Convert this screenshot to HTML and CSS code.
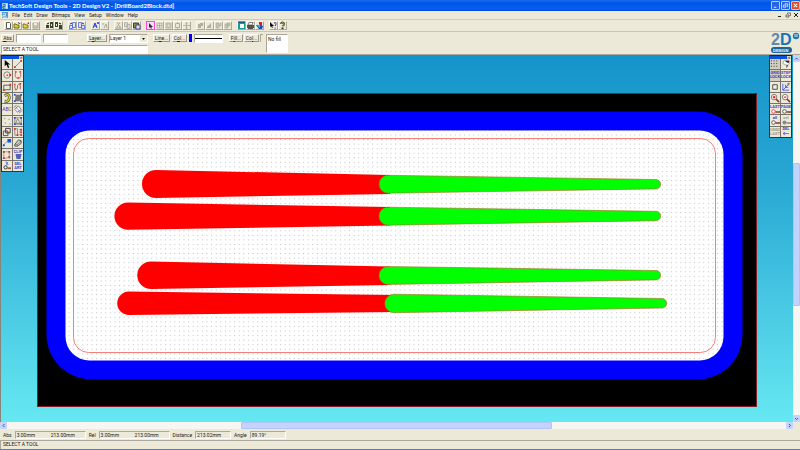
FILE: index.html
```
<!DOCTYPE html>
<html lang="en">
<head>
<meta charset="utf-8">
<title>TechSoft Design Tools - 2D Design V2 - [DrillBoard2Block.dtd]</title>
<link rel="stylesheet" href="styles.css">
</head>
<body>
<div class="app">
  <header class="titlebar">
    <svg class="app-icon" viewBox="0 0 7 7"><rect width="7" height="7" fill="#9fd0f5"/><path d="M1 2h3v2H1v2h3" fill="none" stroke="#23608f"/><path d="M5 1v5" stroke="#fff"/></svg>
    <h1>TechSoft Design Tools - 2D Design V2 - [DrillBoard2Block.dtd]</h1>
    <div class="win-buttons">
      <button class="win" aria-label="Minimize"><svg viewBox="0 0 8 8"><path d="M2 6h3" stroke="#fff"/></svg></button>
      <button class="win" aria-label="Restore"><svg viewBox="0 0 8 8"><path d="M3.500 3V2h3v3h-1M1.500 3.500h3v2.500h-3z" fill="none" stroke="#fff" stroke-width=".8"/></svg></button>
      <button class="win close" aria-label="Close"><svg viewBox="0 0 8 8"><path d="M2 2l4 4M6 2l-4 4" stroke="#fff" stroke-width="1.200"/></svg></button>
    </div>
  </header>

  <nav class="menubar">
    <svg class="doc-icon" viewBox="0 0 7 7"><rect width="7" height="7" fill="#4d9ad0"/><path d="M1 2h3v2H1v2h5" fill="none" stroke="#e8f6ff"/></svg>
    <button>File</button><button>Edit</button><button>Draw</button><button>Bitmaps</button><button>View</button><button>Setup</button><button>Window</button><button>Help</button>
    <div class="doc-buttons">
      <button aria-label="Minimize document"><svg viewBox="0 0 6 6"><path d="M1 4.500h3" stroke="#222"/></svg></button>
      <button aria-label="Restore document"><svg viewBox="0 0 6 6"><path d="M2.500 2V1h3v2.500h-1M1 3h3v2H1z" fill="none" stroke="#444" stroke-width=".7"/></svg></button>
      <button aria-label="Close document"><svg viewBox="0 0 6 6"><path d="M1 1l4 4M5 1L1 5" stroke="#222"/></svg></button>
    </div>
  </nav>

  <div class="toolbar">
    <div class="group">
      <button aria-label="New"><svg viewBox="0 0 9 9"><path d="M2.500 1.500h3l1 1v5h-4z" fill="#fff" stroke="#333" stroke-width=".8"/></svg></button>
      <button aria-label="Open"><svg viewBox="0 0 9 9"><path d="M1 7V3h2l1 1h2v3z" fill="#d8cf3a" stroke="#55500a" stroke-width=".8"/><path d="M5 2q1-1 2 1" fill="none" stroke="#222" stroke-width=".8"/></svg></button>
      <button aria-label="Open example"><svg viewBox="0 0 9 9"><path d="M1 7V3h2l1 1h2v3z" fill="#e0d62d" stroke="#66600a" stroke-width=".8"/><path d="M5 2.500L7 1v2z" fill="#b22"/></svg></button>
      <button aria-label="Save"><svg viewBox="0 0 9 9"><path d="M2 2h5v5H2z" fill="#c8c5b5" stroke="#aaa797"/><path d="M3 2h3v2H3z" fill="#eee"/></svg></button>
    </div>
    <div class="group">
      <button aria-label="Import"><svg viewBox="0 0 9 9"><path d="M1 4h3v3H1zM5 1h3v6H5z" fill="#3b4424"/><path d="M2 3l2-1" stroke="#111"/><path d="M6 3h1v2H6z" fill="#e8e6c9"/></svg></button>
      <button aria-label="Export"><svg viewBox="0 0 9 9"><path d="M1 1h3v5H1zM5 4h3v4H5z" fill="#3b4424"/><path d="M5 2l2 1" stroke="#111"/><path d="M2 3h1v2H2z" fill="#e8e6c9"/></svg></button>
    </div>
    <div class="group">
      <button aria-label="Import picture"><svg viewBox="0 0 9 9"><path d="M4.500 1.500h3v5h-3zM1.500 4.500h3v3h-3z" fill="#dfe6ff" stroke="#4a5fe0" stroke-width=".8"/><path d="M2 3l2-1" stroke="#338"/></svg></button>
      <button aria-label="Export picture"><svg viewBox="0 0 9 9"><path d="M1.500 1.500h3v5h-3zM4.500 4.500h3v3h-3z" fill="#dfe6ff" stroke="#4a5fe0" stroke-width=".8"/><path d="M5 2l2 1" stroke="#338"/></svg></button>
    </div>
    <div class="group">
      <button aria-label="Attribute"><svg viewBox="0 0 9 9"><path d="M2 7l2-5 2 5M3 5h3M6 2h2M7 1v2" fill="none" stroke="#2438e0" stroke-width="1"/></svg></button>
      <button aria-label="Match attributes"><svg viewBox="0 0 9 9"><path d="M2 3h2M4 7l2-4 1 4" fill="none" stroke="#aaa89a" stroke-width="1"/></svg></button>
    </div>
    <div class="group">
      <button aria-label="Cut"><svg viewBox="0 0 9 9"><path d="M3 1l3 5M6 1L3 6" stroke="#aaa89a" stroke-width=".9"/><path d="M2 6h2v1.500H2zM5 6h2v1.500H5z" fill="none" stroke="#aaa89a" stroke-width=".7"/></svg></button>
      <button aria-label="Copy"><svg viewBox="0 0 9 9"><path d="M1.500 1.500h3v4h-3zM4 3.500h3v4H4z" fill="#dedbcb" stroke="#aaa89a" stroke-width=".8"/></svg></button>
      <button aria-label="Paste"><svg viewBox="0 0 9 9"><path d="M1.500 2h5v5h-5z" fill="#8d8a38" stroke="#35340f" stroke-width=".9"/><path d="M4 4h4v4H4z" fill="#dce4ff" stroke="#263599" stroke-width=".8"/></svg></button>
    </div>
    <div class="group">
      <button aria-label="Select"><svg viewBox="0 0 9 9"><rect x=".5" y=".5" width="8" height="8" fill="#f9dff5" stroke="#f04be0"/><path d="M3 2v5l1-1 1 2 1-1-1-1h2z" fill="#442244"/></svg></button>
      <button aria-label="Select group"><svg viewBox="0 0 9 9"><path d="M2 2h5v5H2zM2 4.500h5M4.500 2v5" fill="none" stroke="#aaa89a" stroke-width=".8"/></svg></button>
      <button aria-label="Select all"><svg viewBox="0 0 9 9"><path d="M2 2h5v5H2zM3 3h3v3H3z" fill="none" stroke="#aaa89a" stroke-width=".8"/></svg></button>
      <button aria-label="Resize"><svg viewBox="0 0 9 9"><path d="M2.500 2.500h4v4h-4zM4.500 1v1M4.500 7v1" fill="none" stroke="#aaa89a" stroke-width=".9"/></svg></button>
      <button aria-label="Move"><svg viewBox="0 0 9 9"><path d="M4.500 1v7M1 4.500h7M3.500 2h2M3.500 7h2" stroke="#aaa89a" stroke-width=".8"/></svg></button>
    </div>
    <div class="group">
      <button aria-label="Bring to front"><svg viewBox="0 0 9 9"><path d="M2 3h3v4H2zM4 2h3v3H4z" fill="#b2afa0"/></svg></button>
      <button aria-label="Send to back"><svg viewBox="0 0 9 9"><path d="M2 6l4-4v5H2z" fill="#b2afa0"/></svg></button>
      <button aria-label="Forward"><svg viewBox="0 0 9 9"><path d="M2 2h3v5H2zM6 2h1v3H5" fill="#c5c2b4" stroke="#aaa89a" stroke-width=".6"/></svg></button>
      <button aria-label="Backward"><svg viewBox="0 0 9 9"><path d="M2 3h3v4H2zM4 2h3v3H4z" fill="#c5c2b4" stroke="#aaa89a" stroke-width=".6"/></svg></button>
    </div>
    <div class="group">
      <button aria-label="Print area"><svg viewBox="0 0 9 9"><path d="M1 1h7v7H1z" fill="#159c9c"/><path d="M3 3h4v4H3z" fill="#fff"/><path d="M1 1h7" stroke="#116"/></svg></button>
      <button aria-label="Print"><svg viewBox="0 0 9 9"><path d="M1 4h7v3H1z" fill="#55554a"/><path d="M3 1.500h4L6 4H2z" fill="#fff" stroke="#333" stroke-width=".6"/><path d="M2 7.500h5" stroke="#222" stroke-width=".8"/></svg></button>
      <button aria-label="Colour output"><svg viewBox="0 0 9 9"><path d="M1 4l3 4h3l1-3-2-1z" fill="#1747c5"/><path d="M4 1h3v4H4z" fill="#cc2036"/><path d="M2 5l3-2v4z" fill="#20c5d5"/></svg></button>
    </div>
    <div class="group">
      <button aria-label="Context help"><svg viewBox="0 0 9 9"><path d="M1 1v5l1-1 1 2 1-1-1-1h2z" fill="#111"/><path d="M5 2q2-1 2 .5T6 5M6 6.500v1" fill="none" stroke="#33338f"/></svg></button>
      <button aria-label="Help topics"><svg viewBox="0 0 9 9"><path d="M3 3q0-1.500 1.500-1.500T6 3 4.500 5M4.500 6.500V8" fill="none" stroke="#222" stroke-width="1.800"/><path d="M3 3q0-1.500 1.500-1.500T6 3 4.500 5" fill="none" stroke="#d4d52b" stroke-width=".8"/></svg></button>
    </div>
  </div>

  <div class="properties">
    <div class="prop-left">
      <div class="prop-row">
        <button class="btn abs"><u>A</u>bs</button>
        <input type="text" aria-label="X coordinate"><input type="text" aria-label="Y coordinate">
        <button class="btn layer-btn">L<u>a</u>yer...</button>
        <div class="combo"><select aria-label="Layer"><option>Layer 1</option></select><svg viewBox="0 0 7 7"><path d="M2 3h3L3.500 5z" fill="#111"/></svg></div>
      </div>
      <output class="prompt">SELECT A TOOL</output>
    </div>
    <div class="prop-styles">
      <button class="btn w17">Li<u>n</u>e...</button>
      <button class="btn w15">C<u>o</u>l...</button>
      <span class="pen-colour"></span>
      <span class="pen-line"></span>
    </div>
    <div class="prop-fill">
      <button class="btn w14">F<u>i</u>ll...</button>
      <button class="btn w15">Co<u>l</u>...</button>
      <span class="fill-colour"></span>
    </div>
    <output class="fill-preview">No fill</output>
    <svg class="logo" viewBox="0 0 30 22" role="img" aria-label="2D Design V2">
      <text x="1" y="13" class="logo-two">2</text><text x="10" y="13" class="logo-d">D</text>
      <circle cx="26" cy="4" r="3.200" fill="#2c6fa3"/><text x="24" y="5" class="logo-v">V2</text>
      <rect x="1" y="15" width="21" height="6" rx="3" fill="#1d659c"/><text x="3" y="20" class="logo-name">DESIGN</text>
    </svg>
  </div>

  <main class="workspace">
    <div class="canvas">
      <svg class="drawing" viewBox="1 55 792 367">
        <defs>
          <pattern id="grid" x="68.500" y="134.500" width="4.600" height="4.560" patternUnits="userSpaceOnUse"><rect width="1" height="1" fill="#c0c0c0"/></pattern>
        </defs>
        <rect x="37.500" y="93.500" width="719" height="313" fill="#000" stroke="#841c24"/>
        <rect x="46.500" y="111.500" width="696" height="268" rx="45" fill="#00f"/>
        <rect x="65.500" y="130.500" width="658" height="230" rx="24" fill="#fff"/>
        <rect x="65.500" y="130.500" width="658" height="230" rx="24" fill="url(#grid)"/>
        <rect x="73.500" y="138.500" width="642" height="214" rx="15" fill="none" stroke="#f4807c"/>
        <g fill="#f00">
          <path d="M156 170L390 175V194L156 198A14 14 0 0 1 156 170z"/>
          <path d="M128 202.500L390 207V225.500L128 229.700A13.600 13.600 0 0 1 128 202.500z"/>
          <path d="M151 261.500L390 266.500V285L151 289A13.700 13.700 0 0 1 151 261.500z"/>
          <path d="M129 291.500L396 295V312L129 315A11.700 11.700 0 0 1 129 291.500z"/>
        </g>
        <g fill="#0f0" stroke="#b06a20" stroke-width=".6">
          <path d="M388 175.300L656 179.500A4.700 4.700 0 0 1 656 188.900L388 193.200A8.500 8.500 0 0 1 388 175.300z"/>
          <path d="M388 207.200L656 211.300A4.700 4.700 0 0 1 656 220.700L388 225.200A8.500 8.500 0 0 1 388 207.200z"/>
          <path d="M388 266.500L656 270.500A4.700 4.700 0 0 1 656 279.900L388 284.500A8.500 8.500 0 0 1 388 266.500z"/>
          <path d="M394 294.200L662 298.500A4.700 4.700 0 0 1 662 308L394 312.700A8.500 8.500 0 0 1 394 294.200z"/>
        </g>
      </svg>

      <aside class="palette draw-tools" aria-label="Drawing tools">
        <div class="palette-head"><button aria-label="Close drawing tools">×</button></div>
        <div class="palette-grid">
          <button aria-label="Pointer"><svg viewBox="0 0 11 11"><path d="M3 1v7l2-2 1.500 4 1.500-.7L6.500 6H9z" fill="#000"/></svg></button>
          <button aria-label="Line"><svg viewBox="0 0 11 11"><path d="M2 9l7-7" stroke="#555" stroke-width=".7"/><path d="M1 8h2v2H1zM8 1h2v2H8z" fill="#d23a3a"/></svg></button>
          <button aria-label="Circle"><svg viewBox="0 0 11 11"><circle cx="5.500" cy="5.500" r="3.500" fill="none" stroke="#666" stroke-width=".8"/><path d="M5 5h1.500v1.500H5zM8 4.500h2v2H8z" fill="#d33"/></svg></button>
          <button aria-label="Arc"><svg viewBox="0 0 11 11"><path d="M3 2Q1 9 5.500 9T8 2" fill="none" stroke="#b46262"/><path d="M2 1h2v2H2zM7 1h2v2H7zM5 8h2v2H5z" fill="#d55"/></svg></button>
          <button aria-label="Rectangle"><svg viewBox="0 0 11 11"><path d="M2 3.500h7v5H2z" fill="none" stroke="#444" stroke-width=".9"/><path d="M1 8h2v2H1zM8 2h2v2H8z" fill="#d33"/></svg></button>
          <button aria-label="Curve"><svg viewBox="0 0 11 11"><path d="M2 3v3q1 4 3 1V4q1-3 3 0v4" fill="none" stroke="#a55"/><path d="M1 2h2v1H1zM7 1h2v2H7zM2 8h2v1H2z" fill="#d33"/></svg></button>
          <button aria-label="Path"><svg viewBox="0 0 11 11"><path d="M3 9q5 1 5-4t-5-2" fill="none" stroke="#333" stroke-width="3"/><path d="M3 9q5 1 5-4t-5-2" fill="none" stroke="#ced13e" stroke-width="1.800"/></svg></button>
          <button aria-label="Fill"><svg viewBox="0 0 11 11"><path d="M3 2h6v5l-2 2H2z" fill="#777"/><path d="M1 1h2v2H1zM8 1h2v2H8zM1 8h2v2H1zM8 8h2v2H8z" fill="#334cdf"/></svg></button>
          <button class="letters">AB<b>C</b></button>
          <button aria-label="Dimension"><svg viewBox="0 0 11 11"><path d="M2 6l4-4 3 4-4 3zM1 4l3-3M7 10l3-3" fill="#fff" stroke="#555" stroke-width=".8"/><path d="M3 3l4 5" stroke="#44f" stroke-width=".6"/></svg></button>
          <button aria-label="Points"><svg viewBox="0 0 11 11"><path d="M2 2h1.500v1.500H2zM7 3h1.500v1.500H7zM3 7h1.500v1.500H3zM8 8h1.500v1.500H8z" fill="#aaa"/></svg></button>
          <button aria-label="Transform"><svg viewBox="0 0 11 11"><path d="M2 2h7v7H2zM3 8l2-5 3 5z" fill="none" stroke="#666" stroke-width=".8"/><path d="M1 1h2v2H1zM8 1h2v2H8zM1 8h2v2H1zM8 8h2v2H8z" fill="#334cdf"/></svg></button>
          <button aria-label="Copy shape"><svg viewBox="0 0 11 11"><path d="M4 1.500h5v5H4z" fill="none" stroke="#333"/><path d="M1.500 4.500h5v5h-5z" fill="none" stroke="#448"/><path d="M5 4l2 2" stroke="#d33"/></svg></button>
          <button aria-label="Mirror"><svg viewBox="0 0 11 11"><path d="M2 2h3v7H2zM7 3h2M7 5.500h2M7 8h2" fill="none" stroke="#555" stroke-width=".7"/><path d="M1 1h2v2H1zM4 8h2v2H4zM8 2h2v2H8zM8 5h2v2H8zM8 8h2v2H8z" fill="#d33"/></svg></button>
          <button aria-label="Scale"><svg viewBox="0 0 11 11"><path d="M1 8l6-5" stroke="#7b91df" stroke-width=".8"/><path d="M6 1h4v4H6zM1 7h2v2H1z" fill="#1a50e8"/></svg></button>
          <button aria-label="Erase"><svg viewBox="0 0 11 11"><path d="M2 7l4-5 3 1v3L5 9H2z" fill="#ccc" stroke="#333" stroke-width=".8"/><path d="M2 7h3l4-4M5 7v2" fill="none" stroke="#555" stroke-width=".6"/></svg></button>
          <button aria-label="Region"><svg viewBox="0 0 11 11"><path d="M2 2h6v3Q9 8 5 9H2z" fill="none" stroke="#777" stroke-width=".7"/><path d="M1 1h2v2H1zM7 1h2v2H7zM1 8h2v2H1zM7 7h2v2H7z" fill="#d33"/></svg></button>
          <button class="stack">CLIP<svg viewBox="0 0 8 5"><path d="M1 0h6L6 5H2z" fill="#5162b7"/></svg></button>
          <button aria-label="Measure"><svg viewBox="0 0 11 11"><path d="M4 1h1v3M6 1v3h1" fill="none" stroke="#44f" stroke-width=".7"/><circle cx="4" cy="7" r="1.800" fill="none" stroke="#333"/><path d="M6 8h4" stroke="#963" stroke-width="2"/></svg></button>
          <button class="stack">DEL<br>ART</button>
        </div>
      </aside>

      <aside class="palette view-tools" aria-label="Grid and zoom tools">
        <div class="palette-head"><button aria-label="Close grid and zoom tools">×</button></div>
        <div class="palette-grid">
          <button class="pressed" aria-label="Show grid"><svg viewBox="0 0 11 11"><path d="M1 2h9M1 5h9M1 8h9" stroke="#222" stroke-dasharray="1 2"/></svg></button>
          <button aria-label="Redraw"><svg viewBox="0 0 11 11"><path d="M3 2l5-1 2 3-3 3-5-2z" fill="#fff" stroke="#777" stroke-width=".6"/><path d="M4 2h5v2H7zM6 7v3l2-3" fill="#222"/></svg></button>
          <button class="stack pressed">GRID<br>LOCK</button>
          <button class="stack">STEP<br>LOCK</button>
          <button aria-label="Attach"><svg viewBox="0 0 11 11"><path d="M3 3h5v5H3z" fill="#f2f0e3" stroke="#444"/></svg></button>
          <button aria-label="Axes"><svg viewBox="0 0 11 11"><path d="M2 2v7h7M2 9l6-6M5 3v3h3" fill="none" stroke="#3d55e6" stroke-width=".9"/><path d="M8 1v3M7 2h3" stroke="#444" stroke-width=".7"/></svg></button>
          <button aria-label="Zoom in"><svg viewBox="0 0 11 11"><path d="M6 6l4 4" stroke="#8b3926" stroke-width="1.800"/><circle cx="4.500" cy="4.500" r="3" fill="#fff" stroke="#555" stroke-width=".8"/><path d="M3 4.500h3M4.500 3v3" stroke="#e11" stroke-width="1.200"/></svg></button>
          <button aria-label="Zoom out"><svg viewBox="0 0 11 11"><path d="M6 6l4 4" stroke="#8b3926" stroke-width="1.800"/><circle cx="4.500" cy="4.500" r="3" fill="#fff" stroke="#555" stroke-width=".8"/><path d="M3 4.500h3" stroke="#e11" stroke-width="1.200"/></svg></button>
          <button class="stack">LAST<svg viewBox="0 0 9 5"><circle cx="2.500" cy="2.500" r="1.800" fill="#fff" stroke="#d33" stroke-width=".8"/><path d="M4.500 3H9" stroke="#853b20" stroke-width="1.500"/></svg></button>
          <button class="stack">PAGE<svg viewBox="0 0 9 5"><circle cx="2.500" cy="2.500" r="1.800" fill="#fff" stroke="#444" stroke-width=".8"/><path d="M4.500 3H9" stroke="#853b20" stroke-width="1.500"/></svg></button>
          <button class="stack">all<svg viewBox="0 0 9 5"><circle cx="2.500" cy="2.500" r="1.800" fill="#fff" stroke="#444" stroke-width=".8"/><path d="M4.500 3H9" stroke="#853b20" stroke-width="1.500"/></svg></button>
          <button class="stack" disabled>sel<svg viewBox="0 0 9 5"><circle cx="2.500" cy="2.500" r="2" fill="#888"/><path d="M4.500 3H9" stroke="#888" stroke-width="1.500"/></svg></button>
          <button class="stack" disabled>UNDO<br>LAST</button>
          <button class="stack">DEL<svg viewBox="0 0 9 5"><path d="M1 2.500h6M3 1L1 2.500 3 4" fill="none" stroke="#5362dc" stroke-width=".8"/></svg></button>
        </div>
      </aside>
    </div>

    <div class="scroll vertical">
      <button aria-label="Scroll up"><svg viewBox="0 0 7 7"><path d="M2 4.500L3.500 3 5 4.500" fill="none" stroke="#41588e"/></svg></button>
      <div class="track"><div class="thumb"></div></div>
      <button aria-label="Scroll down"><svg viewBox="0 0 7 7"><path d="M2 3l1.500 1.500L5 3" fill="none" stroke="#41588e"/></svg></button>
    </div>
    <div class="scroll horizontal">
      <button aria-label="Scroll left"><svg viewBox="0 0 7 7"><path d="M4.500 2L3 3.500 4.500 5" fill="none" stroke="#41588e"/></svg></button>
      <div class="track"><div class="thumb"></div></div>
      <button aria-label="Scroll right"><svg viewBox="0 0 7 7"><path d="M3 2l1.500 1.500L3 5" fill="none" stroke="#41588e"/></svg></button>
    </div>
    <div class="corner"></div>
  </main>

  <footer>
    <div class="coords">
      <span>Abs</span><output class="pair"><span>3.00mm</span><span>213.00mm</span></output>
      <span>Rel</span><output class="pair"><span>3.00mm</span><span>213.00mm</span></output>
      <span>Distance</span><output class="single">213.02mm</output>
      <span>Angle</span><output class="single">89.19°</output>
    </div>
    <div class="hint">SELECT A TOOL</div>
  </footer>
</div>
</body>
</html>
```
FILE: styles.css
```
* { box-sizing: border-box; }

body {
  margin: 0;
  background: #ece9d8;
  color: #222;
  font: 5px/6px Roboto, "Liberation Sans", sans-serif;
}

button, input, select {
  margin: 0;
  padding: 0;
  border: 0;
  border-radius: 0;
  background: none;
  color: inherit;
  font: inherit;
}

svg { display: block; }

.app {
  display: flex;
  flex-direction: column;
  height: 100vh;
  border-bottom: 1px solid #4482d8;
}

/* Title bar */
.titlebar {
  display: flex;
  align-items: center;
  flex: 0 0 11px;
  padding: 0 0 0 2px;
  gap: 1px;
  background: linear-gradient(#1a6cf0, #0054e3 30%, #0560f5 80%, #0349cf);
}
.app-icon, .doc-icon { width: 6px; height: 6px; }
h1 {
  flex: 1;
  margin: 0;
  color: #fff;
  font: 700 6px/7px Lato, sans-serif;
}
.win-buttons { display: flex; gap: 1px; }
.win {
  width: 9px;
  height: 9px;
  border: 1px solid #b9cdf5;
  border-radius: 1px;
  background: #2c62e4;
}
.win.close { background: #dc5030; }

/* Menu */
.menubar {
  display: flex;
  align-items: center;
  flex: 0 0 8px;
  padding: 0 1px 0 2px;
  gap: 4px;
}
.menubar > button { font-family: "Liberation Sans Narrow", Roboto, sans-serif; }
.doc-buttons { display: flex; gap: 2px; margin-left: auto; }
.doc-buttons button { width: 6px; height: 6px; }

/* Icon toolbar */
.toolbar {
  display: flex;
  align-items: center;
  flex: 0 0 13px;
  padding-left: 4px;
  gap: 5px;
  border-top: 1px solid #d0cdbd;
  border-bottom: 1px solid #c8c5b5;
}
.group { display: flex; }
.group button {
  width: 9px;
  height: 9px;
  border: 1px solid;
  border-color: #fbfaf5 #aca899 #aca899 #fbfaf5;
}
.group svg { width: 9px; height: 9px; margin: -1px; }

/* Properties */
.properties {
  display: flex;
  align-items: flex-start;
  flex: 0 0 23px;
  padding: 2px 0 0 1px;
  border-bottom: 1px solid #aca899;
}
.prop-left {
  display: flex;
  flex-direction: column;
  gap: 2px;
  width: 147px;
}
.prop-row { display: flex; gap: 2px; }
.btn {
  height: 8px;
  border: 1px solid;
  border-color: #fff #9b9888 #9b9888 #fff;
  line-height: 6px;
}
.abs { width: 13px; }
.layer-btn { width: 20px; margin-left: 17px; }
.prop-row input, .prompt, .fill-preview, .pen-line, .combo {
  border: 1px solid;
  border-color: #aca899 #fff #fff #aca899;
  background: #fff;
}
.prop-row input { width: 25px; height: 9px; }
.combo { display: flex; flex: 1; height: 9px; }
.combo select { flex: 1; min-width: 0; appearance: none; line-height: 7px; }
.combo svg { width: 7px; height: 7px; background: #ece9d8; }
.prompt { display: block; height: 9px; padding-left: 1px; line-height: 7px; }
.prompt, .hint { font-family: "Liberation Sans Narrow", Roboto, sans-serif; }
.prop-styles { display: flex; gap: 2px; margin-left: 5px; }
.prop-fill { display: flex; gap: 1px; margin-left: 6px; }
.w17 { width: 17px; }
.w15 { width: 15px; }
.w14 { width: 14px; }
.pen-colour { width: 3px; height: 8px; background: #00f; }
.pen-line { display: flex; align-items: center; width: 29px; height: 9px; }
.pen-line::before { content: ""; flex: 1; height: 1px; background: #000; }
.fill-colour {
  width: 3px;
  height: 8px;
  border-top: 1px solid #aca899;
  border-left: 1px solid #aca899;
}
.fill-preview { width: 22px; height: 19px; margin-left: 3px; padding: 1px; }
.logo {
  width: 30px;
  height: 22px;
  margin-left: auto;
  margin-top: -2px;
  overflow: visible;
}
.logo text { font-family: "Liberation Sans", sans-serif; font-weight: 700; }
.logo-two { font-size: 16px; fill: #6488aa; }
.logo-d { font-size: 16px; fill: #1474bb; }
.logo .logo-v { font-size: 3px; fill: #fff; }
.logo .logo-name { font-size: 4px; fill: #fff; }

/* Workspace */
.workspace {
  display: grid;
  grid-template-columns: 1fr 7px;
  grid-template-rows: 1fr 7px;
  flex: 1;
  min-height: 0;
}
.canvas {
  position: relative;
  min-height: 0;
  border-left: 1px solid #85857c;
  background: linear-gradient(#1594cb, #29a8d4 35%, #66e8f2);
}
.drawing { width: 100%; height: 100%; }

.palette {
  position: absolute;
  top: 0;
  display: flex;
  flex-direction: column;
  width: 23px;
  border: 1px solid #333;
  border-top: 0;
  background: #77756a;
}
.draw-tools { left: 0; height: 117px; }
.view-tools { right: 1px; height: 83px; }
.palette-head {
  display: flex;
  justify-content: flex-end;
  height: 4px;
  background: #0a50dc;
  border-top: 1px solid #222;
}
.palette-head button {
  width: 4px;
  height: 3px;
  background: #d8d4c4;
  font-size: 4px;
  line-height: 3px;
}
.palette-grid {
  display: grid;
  grid-template-columns: 1fr 1fr;
  grid-auto-rows: 1fr;
  flex: 1;
  gap: 1px;
}
.palette-grid button {
  min-width: 0;
  min-height: 0;
  background: #ece9d8;
  color: #3942c8;
  font-size: 4px;
  line-height: 4px;
}
.palette-grid svg { width: 10px; height: 10px; }
.palette-grid b { color: #c33; font-weight: 400; }
.palette-grid .letters { font-size: 5px; }
.palette-grid .stack { font-family: "Liberation Sans Narrow", Roboto, sans-serif; font-weight: 700; }
.palette-grid .stack svg { width: 9px; height: 5px; margin: 0 auto; }
.palette-grid .pressed { background: #d2cfbf; }
.palette-grid button:disabled { color: #99978b; }

.scroll { display: flex; background: #f7f6f1; }
.scroll button { flex: 0 0 7px; background: #c3d3fd; border-radius: 1px; }
.scroll svg { width: 7px; height: 7px; }
.track { display: grid; flex: 1; }
.thumb { border: 1px solid #b0c4f5; border-radius: 1px; background: #c3d3fd; }
.vertical { flex-direction: column; }
.vertical .thumb { grid-row: 2; }
.vertical .track { grid-template-rows: 101fr 143fr 109fr; }
.horizontal .track { grid-template-columns: 234fr 310fr 234fr; }
.horizontal .thumb { grid-column: 2; }
.corner { background: #ece9d8; }

/* Status */
footer { flex: 0 0 20px; }
.coords {
  display: flex;
  align-items: center;
  height: 11px;
  padding: 2px 0 1px 3px;
  gap: 3px;
}
.coords output {
  height: 8px;
  padding-left: 1px;
  border: 1px solid;
  border-color: #aca899 #fff #fff #aca899;
}
.pair { display: grid; grid-template-columns: 1fr 1fr; width: 71px; }
.single { width: 36px; }
.hint {
  height: 9px;
  padding-left: 2px;
  border-top: 1px solid #aca899;
  border-left: 1px solid #aca899;
  line-height: 7px;
}
```
